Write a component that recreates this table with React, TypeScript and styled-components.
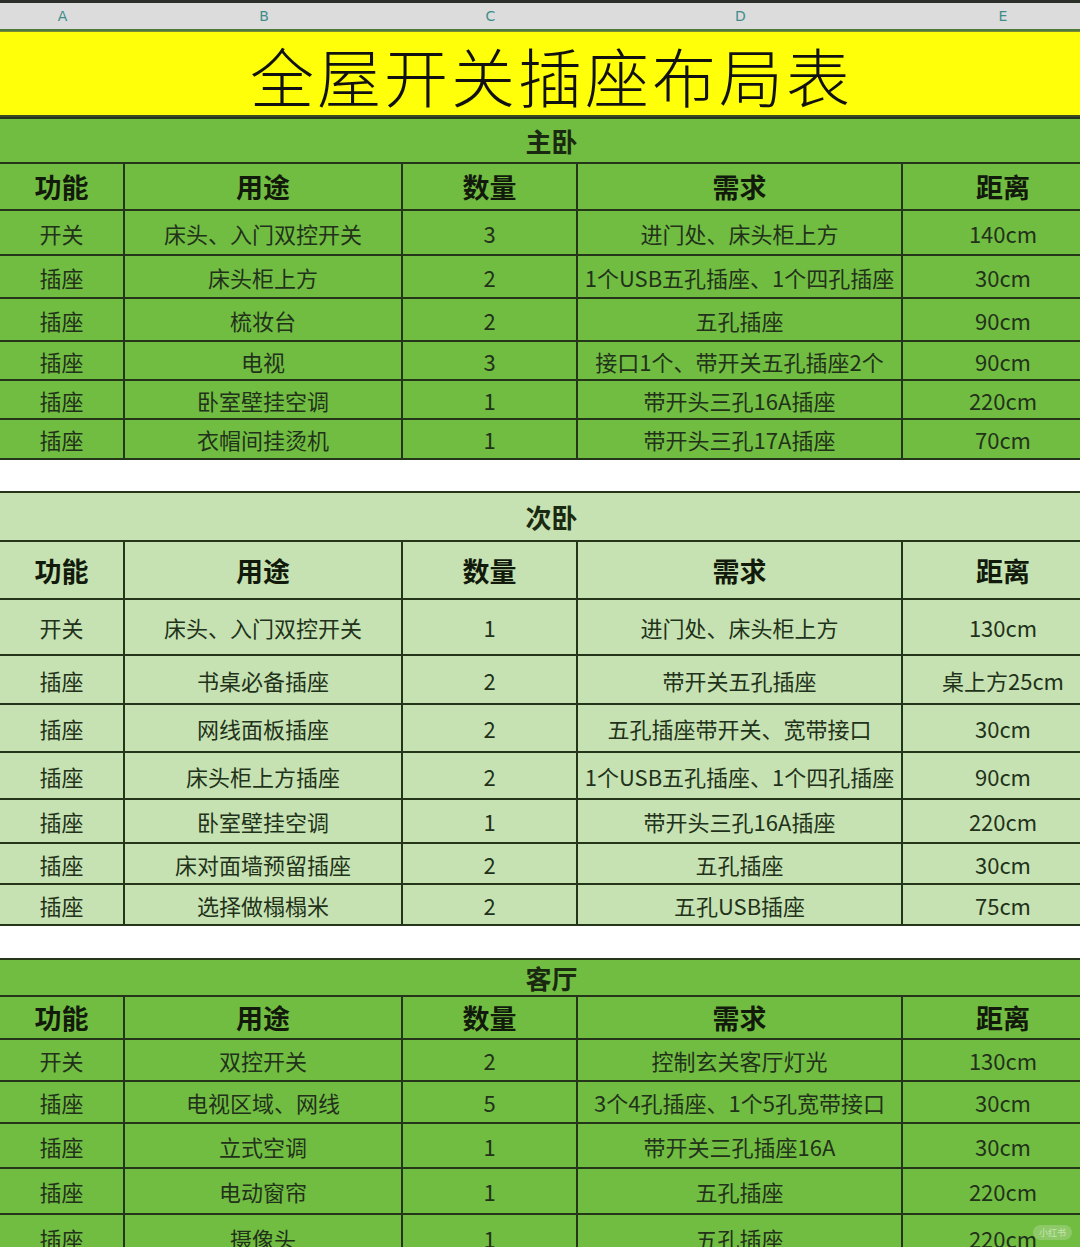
import React from 'react';
import styled, { createGlobalStyle } from 'styled-components';

const GlobalStyle = createGlobalStyle`
    *, *::before, *::after {
        box-sizing: border-box;
    }

    body {
        margin: 0;
        background: #ffffff;
        font-family: "Noto Sans CJK SC", "Liberation Sans", sans-serif;
    }
`;

// last column runs past the right edge of the screen, like the sheet does
const COLS = '125px 278px 175px 325px 200px';
const LINE = '#24351a';

const Page = styled.div`
    width: 1080px;
    height: 1247px;
    overflow: hidden;
    position: relative;
    background: #ffffff;
`;

const Sheet = styled.div`
    width: 1103px;
`;

const TopStrip = styled.div`
    height: 3px;
    background: #2b2f2a;
`;

const Letters = styled.div`
    display: grid;
    grid-template-columns: ${COLS};
    height: 28px;
    background: #dcdcdc;
    border-bottom: 2px solid #4f7a3a;
    color: #3f8d8b;
    font-family: "DejaVu Sans", sans-serif;
    font-size: 14px;

    span {
        display: flex;
        align-items: center;
        justify-content: center;
    }
`;

const TitleBar = styled.div`
    height: 86px;
    background: #ffff0a;
    border-top: 1px solid #7a8a3a;
    border-bottom: 2px solid #3d4a28;
    display: flex;
    align-items: center;
    justify-content: center;
    font-size: 64px;
    font-weight: 300;
    letter-spacing: 3px;
    color: #111111;
`;

const Section = styled.div<{ $light?: boolean }>`
    background: ${p => (p.$light ? '#c7e2b2' : '#71bd42')};
    border-top: 2px solid ${LINE};
`;

const SectionTitle = styled.div<{ $h: number }>`
    height: ${p => p.$h}px;
    display: flex;
    align-items: center;
    justify-content: center;
    font-size: 26px;
    font-weight: 700;
    color: #1a2a10;
    border-bottom: 2px solid ${LINE};
`;

const Row = styled.div<{ $h: number }>`
    display: grid;
    grid-template-columns: ${COLS};
    height: ${p => p.$h}px;
    border-bottom: 2px solid ${LINE};
`;

const Cell = styled.div<{ $head?: boolean }>`
    display: flex;
    align-items: center;
    justify-content: center;
    border-right: 2px solid ${LINE};
    font-size: ${p => (p.$head ? '27px' : '22px')};
    font-weight: ${p => (p.$head ? 700 : 400)};
    color: ${p => (p.$head ? '#111a0b' : '#22321a')};
    white-space: nowrap;

    &:last-child {
        border-right: none;
    }
`;

const Gap = styled.div<{ $h: number }>`
    height: ${p => p.$h}px;
    background: #ffffff;
`;

const Watermark = styled.div`
    position: absolute;
    right: 8px;
    bottom: 7px;
    padding: 1px 6px;
    border-radius: 10px;
    background: rgba(255, 255, 255, 0.2);
    color: rgba(255, 255, 255, 0.5);
    font-size: 9px;
`;

type Item = [string, string, string, string, string];

const HEAD: Item = ['功能', '用途', '数量', '需求', '距离'];

interface Block {
    name: string;
    light?: boolean;
    titleH: number;
    headH: number;
    rowH: number[];
    rows: Item[];
}

const blocks: Block[] = [
    {
        name: '主卧',
        titleH: 45,
        headH: 47,
        rowH: [45, 43, 43, 39, 39, 40],
        rows: [
            ['开关', '床头、入门双控开关', '3', '进门处、床头柜上方', '140cm'],
            ['插座', '床头柜上方', '2', '1个USB五孔插座、1个四孔插座', '30cm'],
            ['插座', '梳妆台', '2', '五孔插座', '90cm'],
            ['插座', '电视', '3', '接口1个、带开关五孔插座2个', '90cm'],
            ['插座', '卧室壁挂空调', '1', '带开头三孔16A插座', '220cm'],
            ['插座', '衣帽间挂烫机', '1', '带开头三孔17A插座', '70cm'],
        ],
    },
    {
        name: '次卧',
        light: true,
        titleH: 49,
        headH: 58,
        rowH: [56, 49, 48, 47, 44, 41, 41],
        rows: [
            ['开关', '床头、入门双控开关', '1', '进门处、床头柜上方', '130cm'],
            ['插座', '书桌必备插座', '2', '带开关五孔插座', '桌上方25cm'],
            ['插座', '网线面板插座', '2', '五孔插座带开关、宽带接口', '30cm'],
            ['插座', '床头柜上方插座', '2', '1个USB五孔插座、1个四孔插座', '90cm'],
            ['插座', '卧室壁挂空调', '1', '带开头三孔16A插座', '220cm'],
            ['插座', '床对面墙预留插座', '2', '五孔插座', '30cm'],
            ['插座', '选择做榻榻米', '2', '五孔USB插座', '75cm'],
        ],
    },
    {
        name: '客厅',
        titleH: 37,
        headH: 43,
        rowH: [42, 42, 45, 46, 47],
        rows: [
            ['开关', '双控开关', '2', '控制玄关客厅灯光', '130cm'],
            ['插座', '电视区域、网线', '5', '3个4孔插座、1个5孔宽带接口', '30cm'],
            ['插座', '立式空调', '1', '带开关三孔插座16A', '30cm'],
            ['插座', '电动窗帘', '1', '五孔插座', '220cm'],
            ['插座', '摄像头', '1', '五孔插座', '220cm'],
        ],
    },
];

const Table: React.FC<{ block: Block }> = ({ block }) => (
    <Section $light={block.light}>
        <SectionTitle $h={block.titleH}>{block.name}</SectionTitle>
        <Row $h={block.headH}>
            {HEAD.map(h => <Cell key={h} $head>{h}</Cell>)}
        </Row>
        {block.rows.map((r, i) => (
            <Row key={i} $h={block.rowH[i]}>
                {r.map((c, j) => <Cell key={j}>{c}</Cell>)}
            </Row>
        ))}
    </Section>
);

const App: React.FC = () => (
    <Page>
        <GlobalStyle />
        <Sheet>
            <TopStrip />
            <Letters>
                {['A', 'B', 'C', 'D', 'E'].map(l => <span key={l}>{l}</span>)}
            </Letters>
            <TitleBar>全屋开关插座布局表</TitleBar>
            <Table block={blocks[0]} />
            <Gap $h={31} />
            <Table block={blocks[1]} />
            <Gap $h={32} />
            <Table block={blocks[2]} />
        </Sheet>
        <Watermark>小红书</Watermark>
    </Page>
);

export default App;
